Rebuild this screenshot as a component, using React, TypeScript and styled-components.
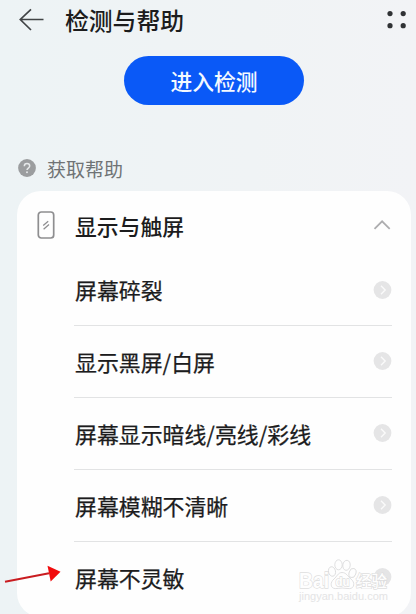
import React from "react";
import styled, { createGlobalStyle } from "styled-components";

const GlobalStyle = createGlobalStyle`
  *, *::before, *::after { box-sizing: border-box; }
  html, body { margin: 0; background: #eff3f5; overflow: hidden; }
  body { font-family: "Noto Sans CJK SC", sans-serif; color: #1c1c1d; }
`;

const Screen = styled.main`
  position: relative;
  width: 416px;
  height: 614px;
  overflow: hidden;
  display: flex;
  flex-direction: column;
  background: linear-gradient(90deg, #edf3f5, #f0f3f5 60%, #f2f3f6);
`;

const Header = styled.header`
  display: flex;
  align-items: center;
  height: 40px;
  padding: 0 8px 0 18px;
`;

const Title = styled.h1`
  flex: 1;
  margin: 0 0 0 20px;
  font-size: 23.8px;
  line-height: 40px;
  font-weight: 500;
`;

const Icon = styled.svg`
  display: block;
  flex: none;
`;

const CheckButton = styled.button`
  align-self: center;
  width: 180px;
  height: 49px;
  margin: 16px 0 0 12px;
  padding: 0;
  border: 0;
  border-radius: 25px;
  background: #0a59f7;
  color: #f4f9ff;
  font: 500 21.8px/49px "Noto Sans CJK SC", sans-serif;
`;

const SectionLabel = styled.h2`
  display: flex;
  align-items: center;
  gap: 11px;
  height: 30px;
  margin: 48px 0 0 18px;
  color: #707375;
  font-size: 19px;
  font-weight: 400;
`;

const LabelText = styled.span`
  padding-top: 2px;
`;

const Card = styled.section`
  flex: none;
  width: 394px;
  height: 426px;
  margin: 9px 0 0 17px;
  padding: 0 19px 0 20px;
  border-radius: 24px;
  background: #fefefe;
`;

const CardHeader = styled.div`
  display: flex;
  align-items: center;
  height: 67px;
`;

const CardTitle = styled.h3`
  flex: 1;
  margin: 3px 0 0 20px;
  font-size: 21.8px;
  line-height: 32px;
  font-weight: 500;
`;

const List = styled.ul`
  list-style: none;
  margin: 0 0 0 37px;
  padding: 0;
`;

const Row = styled.li<{ $first?: boolean; $last?: boolean }>`
  display: flex;
  align-items: center;
  justify-content: space-between;
  height: ${(p) => (p.$first ? 68 : 72)}px;
  padding: 0 0 ${(p) => (p.$first ? 4 : 1)}px 1px;
  border-bottom: 1px solid ${(p) => (p.$last ? "transparent" : "#e2e3e4")};
`;

const RowText = styled.span`
  padding-top: 1px;
  font-size: 21.9px;
  line-height: 32px;
  font-weight: 400;
  -webkit-text-stroke: 0.25px currentColor;
`;

const Overlay = styled.svg<{ $x: number; $y: number }>`
  position: absolute;
  left: ${(p) => p.$x}px;
  top: ${(p) => p.$y}px;
`;

const MarkText = styled.text`
  fill: #fefefe;
  stroke: #dededf;
  stroke-width: 1.4px;
  paint-order: stroke;
`;

const problems = ["屏幕碎裂", "显示黑屏/白屏", "屏幕显示暗线/亮线/彩线", "屏幕模糊不清晰", "屏幕不灵敏"];

const BackIcon = () => (
  <Icon width="27" height="26" viewBox="0 0 27 26" fill="none" stroke="#414446" strokeWidth="1.7">
    <path d="M25.5 12.5H2.5M13 2.3 2.3 12.5 13 23" />
  </Icon>
);

const MoreIcon = () => (
  <Icon width="22" height="22" viewBox="0 0 22 22" fill="#303235">
    <circle cx="4" cy="4.6" r="2.6" />
    <circle cx="17.2" cy="4.6" r="2.6" />
    <circle cx="4" cy="16.7" r="2.6" />
    <circle cx="17.2" cy="16.7" r="2.6" />
  </Icon>
);

const HelpIcon = () => (
  <Icon width="18" height="18" viewBox="0 0 18 18" fill="none">
    <circle cx="9" cy="9" r="8.9" fill="#9b9d9f" />
    <path d="M6.3 7.2C6.3 5.5 7.4 4.5 9 4.5s2.7 1 2.7 2.5c0 2-2.7 2.1-2.7 4.1" stroke="#e6e9ea" strokeWidth="1.5" />
    <circle cx="9" cy="13.3" r="0.95" fill="#e6e9ea" />
  </Icon>
);

const PhoneIcon = () => (
  <Icon width="18" height="28" viewBox="0 0 18 28" fill="none" stroke="#8e8e90" strokeWidth="1.7">
    <rect x="1.3" y="1" width="15.4" height="26" rx="3" />
    <path d="m11.2 10.2-5 4.2M12 13.6l-5.4 4.6" strokeWidth="1.3" />
  </Icon>
);

const CollapseIcon = () => (
  <Icon width="20" height="12" viewBox="0 0 20 12" fill="none" stroke="#adadaf" strokeWidth="1.8">
    <path d="m2.5 9.8 7.6-7.5 7.6 7.5" />
  </Icon>
);

const GoIcon = () => (
  <Icon width="19" height="18" viewBox="0 0 19 18" fill="none">
    <circle cx="9.5" cy="9" r="8.9" fill="#e5e5e6" />
    <path d="m8 4.8 4.2 4.2L8 13.2" stroke="#fafafa" strokeWidth="1.4" />
  </Icon>
);

const Watermark = () => (
  <Overlay $x={295} $y={555} width="110" height="52" viewBox="0 0 110 52">
    <g fill="#fefefe" fillOpacity="0.85" stroke="#d8d8d9" strokeWidth="0.8">
      <ellipse cx="37" cy="16.5" rx="3.5" ry="4.8" transform="rotate(-12 37 16.5)" />
      <ellipse cx="43.5" cy="9.8" rx="3.7" ry="5" />
      <ellipse cx="51.5" cy="10.3" rx="3.7" ry="5" transform="rotate(8 51.5 10.3)" />
      <ellipse cx="57.5" cy="18" rx="3.4" ry="4.7" transform="rotate(18 57.5 18)" />
      <path d="M47 17.5c-4 0-5 4-8 6.5-4 3.3-4 9.2 1.2 9.6 2.6.2 4.2-.6 7-.6s4.7.8 7.4.6c5-.4 5.5-6.2 1.5-9.5-3.2-2.7-4.9-6.6-9.1-6.6Z" />
    </g>
    <g fontFamily="Liberation Sans, sans-serif" fontWeight="700">
      <MarkText x="4" y="33" fontSize="22" textLength="30" lengthAdjust="spacingAndGlyphs">Bai</MarkText>
      <MarkText x="40.5" y="31" fontSize="12.5" textLength="14" lengthAdjust="spacingAndGlyphs">du</MarkText>
    </g>
    <MarkText x="61" y="31.5" fontFamily="Noto Sans CJK SC, sans-serif" fontWeight="500" fontSize="15.5">经验</MarkText>
    <text x="4" y="45" fill="#e4e4e5" fontFamily="Liberation Sans, sans-serif" fontSize="11.5" textLength="89" lengthAdjust="spacingAndGlyphs">jingyan.baidu.com</text>
  </Overlay>
);

export default function App() {
  return (
    <>
      <GlobalStyle />
      <Screen>
        <Header>
          <BackIcon />
          <Title>检测与帮助</Title>
          <MoreIcon />
        </Header>
        <CheckButton>进入检测</CheckButton>
        <SectionLabel>
          <HelpIcon />
          <LabelText>获取帮助</LabelText>
        </SectionLabel>
        <Card>
          <CardHeader>
            <PhoneIcon />
            <CardTitle>显示与触屏</CardTitle>
            <CollapseIcon />
          </CardHeader>
          <List>
            {problems.map((name, i) => (
              <Row key={name} $first={i === 0} $last={i === problems.length - 1}>
                <RowText>{name}</RowText>
                <GoIcon />
              </Row>
            ))}
          </List>
        </Card>
        <Overlay $x={0} $y={560} width="66" height="30" viewBox="0 0 66 30">
          <path d="m5 21.7 44-8.5" stroke="#c91c20" strokeWidth="1.9" />
          <path d="m47.5 5.8 13 6-9.8 9.7Z" fill="#f10b0d" />
        </Overlay>
        <Watermark />
      </Screen>
    </>
  );
}
